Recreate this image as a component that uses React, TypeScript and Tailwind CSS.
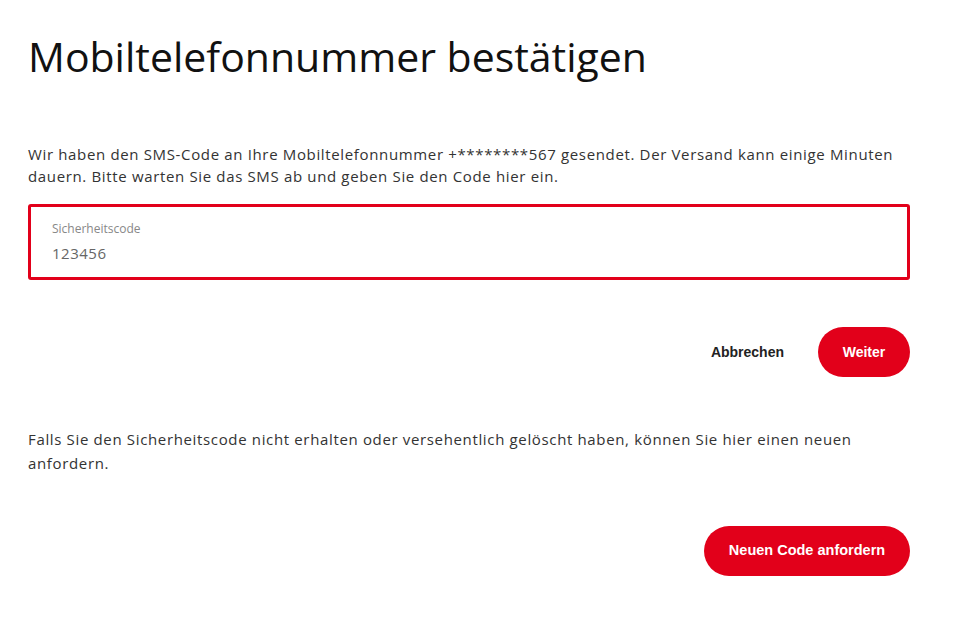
export default function App() {
  return (
    <main className="min-h-[634px] w-[960px] bg-white text-black" style={{ fontFamily: "'Open Sans', Lato, sans-serif" }}>
      <div className="flex flex-col px-[28px] pt-[30px] w-[938px]">
        <h1 className="text-[41px] leading-[52px] font-medium text-[#111]">Mobiltelefonnummer bestätigen</h1>

        <p className="mt-[61px] text-[15px] leading-[22px] tracking-[0.65px] text-[#333] pr-[10px]">
          Wir haben den SMS-Code an Ihre Mobiltelefonnummer +********567 gesendet. Der Versand kann einige Minuten dauern. Bitte warten Sie das SMS ab und geben Sie den Code hier ein.
        </p>

        <div className="mt-[17px] h-[76px] border-[3px] border-[#e2001a] rounded-[3px] px-[21px] pt-[14px] flex flex-col">
          <span className="text-[12px] leading-[16px] text-[#888]">Sicherheitscode</span>
          <span className="mt-[6px] text-[15px] leading-[20px] text-[#666] tracking-[0.5px]">123456</span>
        </div>

        <div className="mt-[47px] flex justify-end items-center gap-[34px]">
          <button className="text-[14px] font-bold text-[#222]" style={{ fontFamily: "'Liberation Sans', Arial, sans-serif" }}>Abbrechen</button>
          <button className="h-[50px] w-[92px] rounded-full bg-[#e2001a] text-white text-[14px] font-bold" style={{ fontFamily: "'Liberation Sans', Arial, sans-serif" }}>Weiter</button>
        </div>

        <p className="mt-[50px] text-[15px] leading-[24px] tracking-[0.65px] text-[#333] pr-[10px]">
          Falls Sie den Sicherheitscode nicht erhalten oder versehentlich gelöscht haben, können Sie hier einen neuen anfordern.
        </p>

        <div className="mt-[51px] flex justify-end">
          <button className="h-[50px] w-[206px] rounded-full bg-[#e2001a] text-white text-[14.5px] font-bold" style={{ fontFamily: "'Liberation Sans', Arial, sans-serif" }}>Neuen Code anfordern</button>
        </div>
      </div>
    </main>
  );
}
